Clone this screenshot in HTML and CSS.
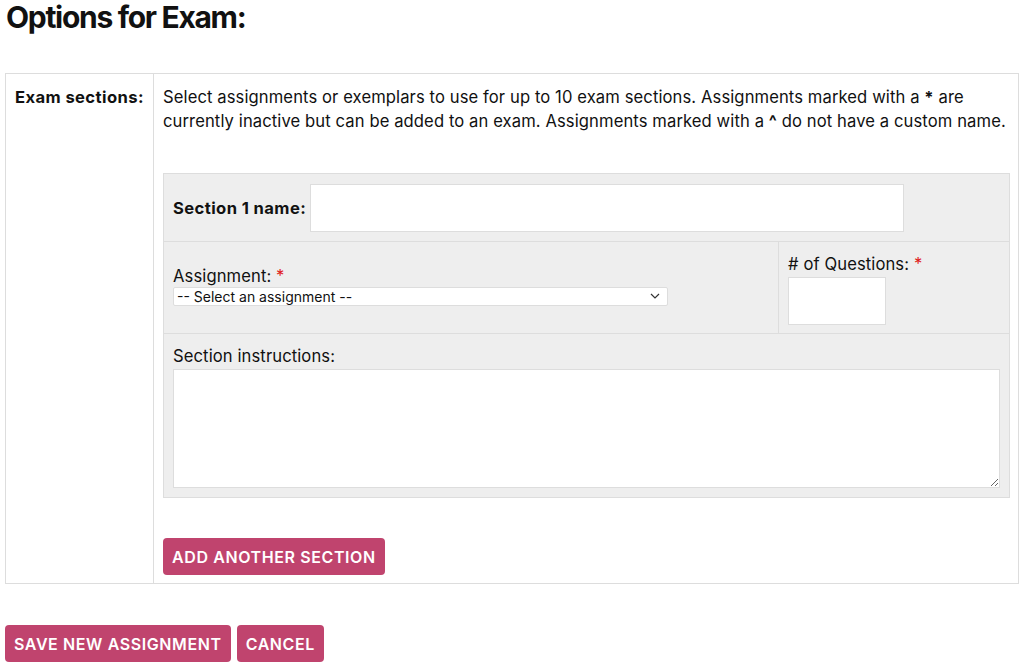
FILE: index.html
```html
<!DOCTYPE html>
<html>
<head>
    <link rel="stylesheet" href="styles.css">
</head>
<body>
    <h1 class="page-title">Options for Exam:</h1>

    <div class="options-table">
        <div class="options-label">Exam sections:</div>
        <div class="options-body">
            <p class="help-text">Select assignments or exemplars to use for up to 10 exam sections. Assignments marked with a <b>*</b> are currently inactive but can be added to an exam. Assignments marked with a <b>^</b> do not have a custom name.</p>

            <div class="section-box">
                <div class="section-row name-row">
                    <label class="name-label" for="section-name">Section 1 name:</label>
                    <input type="text" class="name-input" id="section-name">
                </div>
                <div class="section-row split-row">
                    <div class="split-cell assignment-cell">
                        <label for="assignment">Assignment: <span class="required">*</span></label>
                        <div class="select-wrap">
                            <select class="assignment-select" id="assignment">
                                <option>-- Select an assignment --</option>
                            </select>
                            <svg class="select-arrow" width="10" height="6" viewBox="0 0 10 6">
                                <path d="M1 1 L5 5 L9 1" fill="none" stroke="#333" stroke-width="1.2"/>
                            </svg>
                        </div>
                    </div>
                    <div class="split-cell questions-cell">
                        <label for="questions"># of Questions: <span class="required">*</span></label>
                        <input type="text" class="questions-input" id="questions">
                    </div>
                </div>
                <div class="section-row instructions-row">
                    <label for="instructions">Section instructions:</label>
                    <textarea class="instructions-input" id="instructions"></textarea>
                </div>
            </div>

            <button class="button add-button">Add another section</button>
        </div>
    </div>

    <div class="form-actions">
        <button class="button">Save new assignment</button>
        <button class="button">Cancel</button>
    </div>
</body>
</html>
```

FILE: styles.css
```css
/* Estilos */
body {
    font-family: Inter, "Liberation Sans", Arial, sans-serif;
    font-size: 16.6px;
    letter-spacing: 0.1px;
    color: #111;
    background-color: #fff;
    margin: 0;
    padding: 0 5px;
}

.page-title {
    font-size: 30px;
    font-weight: 700;
    letter-spacing: -1.3px;
    margin: 0;
    padding: 0 1px;
    line-height: 34px;
}

.options-table {
    display: grid;
    grid-template-columns: 148px 1fr;
    border: 1px solid #ddd;
    margin-top: 39px;
    width: 1012px;
}

.options-label {
    font-weight: 700;
    letter-spacing: 0.4px;
    padding: 13px 9px;
    border-right: 1px solid #ddd;
}

.options-body {
    padding: 11px 9px 8px 9px;
}

.help-text {
    margin: 0 0 40px 0;
    line-height: 24px;
}

.section-box {
    background-color: #eee;
    border: 1px solid #ddd;
}

.section-row {
    border-bottom: 1px solid #ddd;
}

.section-row:last-child {
    border-bottom: none;
}

.name-row {
    display: flex;
    align-items: center;
    padding: 9px 9px;
    height: 49px;
}

.name-label {
    font-weight: 700;
    letter-spacing: 0.4px;
    margin-right: 4px;
}

.name-input {
    width: 594px;
    height: 48px;
    box-sizing: border-box;
    border: 1px solid #ddd;
    background: #fff;
}

.split-row {
    display: grid;
    grid-template-columns: 615px 1fr;
    height: 91px;
}

.split-cell {
    padding: 9px;
}

.assignment-cell {
    border-right: 1px solid #ddd;
    padding-top: 24px;
}

.assignment-cell label,
.questions-cell label {
    display: block;
}

.select-wrap {
    position: relative;
    width: 495px;
    margin-top: 1px;
}

.assignment-select {
    display: block;
    width: 495px;
    height: 19px;
    appearance: none;
    font-family: Inter, "Liberation Sans", Arial, sans-serif;
    font-size: 14px;
    line-height: 17px;
    color: #111;
    border: 1px solid #ddd;
    background: #fff;
    border-radius: 2px;
    padding: 0 3px;
}

.select-arrow {
    position: absolute;
    right: 8px;
    top: 6px;
    pointer-events: none;
}

.questions-cell {
    padding-top: 12px;
}

.questions-input {
    display: block;
    width: 98px;
    height: 48px;
    box-sizing: border-box;
    border: 1px solid #ddd;
    background: #fff;
    margin-top: 3px;
}

.required {
    color: #e02020;
}

.instructions-row {
    padding: 12px 9px 9px 9px;
}

.instructions-row label {
    display: block;
}

.instructions-input {
    display: block;
    width: 827px;
    height: 119px;
    box-sizing: border-box;
    border: 1px solid #ddd;
    background: #fff;
    margin-top: 3px;
}

.button {
    background-color: #c0446e;
    color: #fff;
    border: none;
    border-radius: 4px;
    padding: 0 9px;
    height: 37px;
    font-family: Inter, "Liberation Sans", Arial, sans-serif;
    font-size: 16px;
    font-weight: 600;
    letter-spacing: 0.6px;
    text-transform: uppercase;
    cursor: pointer;
}

.add-button {
    margin-top: 40px;
}

.form-actions {
    display: flex;
    gap: 6px;
    margin-top: 41px;
}
```
